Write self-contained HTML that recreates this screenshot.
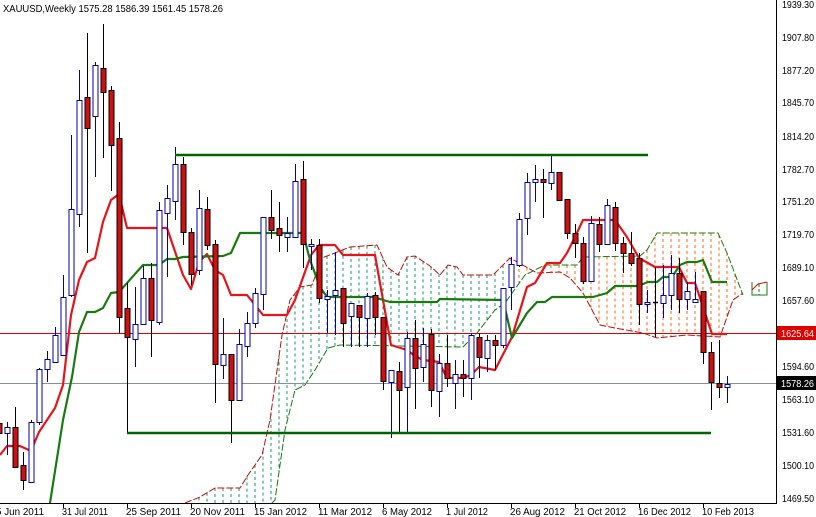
<!DOCTYPE html>
<html><head><meta charset="utf-8"><style>
html,body{margin:0;padding:0;background:#fff;}
svg{display:block;font-family:"Liberation Sans",sans-serif;}
</style></head><body>
<svg id="s" width="816" height="517" viewBox="0 0 816 517" xmlns="http://www.w3.org/2000/svg">
<rect width="816" height="517" fill="#fff"/>
<g id="cloud"></g>
<line x1="0" y1="333.5" x2="776" y2="333.5" stroke="#e00000" stroke-width="1"/>
<line x1="0" y1="383.5" x2="776" y2="383.5" stroke="#8890a0" stroke-width="1"/>
<polyline id="ten" fill="none" stroke="#e8141a" stroke-width="2.2" stroke-linejoin="round"/>
<polyline id="kij" fill="none" stroke="#1a7a12" stroke-width="2.2" stroke-linejoin="round"/>
<g id="candles"></g>
<line x1="175" y1="155" x2="648" y2="155" stroke="#006400" stroke-width="2.5"/>
<line x1="127" y1="433" x2="711" y2="433" stroke="#006400" stroke-width="2.5"/>
<line x1="776.5" y1="0" x2="776.5" y2="503" stroke="#000"/>
<line x1="0" y1="503.5" x2="777" y2="503.5" stroke="#000"/>
<g id="ticks" stroke="#000"></g>
<text x="3" y="12" font-size="10.5" fill="#000" textLength="220" lengthAdjust="spacingAndGlyphs">XAUUSD,Weekly  1575.28 1586.39 1561.45 1578.26</text>
<g font-size="10" fill="#000">
<text x="782" y="8" textLength="32" lengthAdjust="spacingAndGlyphs">1939.30</text>
<text x="782" y="41" textLength="32" lengthAdjust="spacingAndGlyphs">1907.80</text>
<text x="782" y="74" textLength="32" lengthAdjust="spacingAndGlyphs">1877.20</text>
<text x="782" y="106" textLength="32" lengthAdjust="spacingAndGlyphs">1845.70</text>
<text x="782" y="140" textLength="32" lengthAdjust="spacingAndGlyphs">1814.20</text>
<text x="782" y="173" textLength="32" lengthAdjust="spacingAndGlyphs">1782.70</text>
<text x="782" y="205" textLength="32" lengthAdjust="spacingAndGlyphs">1751.20</text>
<text x="782" y="238" textLength="32" lengthAdjust="spacingAndGlyphs">1719.70</text>
<text x="782" y="271" textLength="32" lengthAdjust="spacingAndGlyphs">1689.10</text>
<text x="782" y="304" textLength="32" lengthAdjust="spacingAndGlyphs">1657.60</text>
<text x="782" y="370" textLength="32" lengthAdjust="spacingAndGlyphs">1594.60</text>
<text x="782" y="403" textLength="32" lengthAdjust="spacingAndGlyphs">1563.10</text>
<text x="782" y="436" textLength="32" lengthAdjust="spacingAndGlyphs">1531.60</text>
<text x="782" y="469" textLength="32" lengthAdjust="spacingAndGlyphs">1500.10</text>
<text x="782" y="502" textLength="32" lengthAdjust="spacingAndGlyphs">1469.50</text>
</g>
<rect x="777" y="326" width="39" height="14" fill="#e00000"/>
<text x="781" y="337" font-size="10" fill="#fff" textLength="33" lengthAdjust="spacingAndGlyphs">1625.64</text>
<rect x="777" y="376" width="39" height="14" fill="#000"/>
<text x="781" y="387" font-size="10" fill="#fff" textLength="33" lengthAdjust="spacingAndGlyphs">1578.26</text>
<g font-size="10" fill="#000">
<text x="-4" y="515" textLength="48" lengthAdjust="spacingAndGlyphs">5 Jun 2011</text>
<text x="62" y="515" textLength="46" lengthAdjust="spacingAndGlyphs">31 Jul 2011</text>
<text x="126" y="515" textLength="55" lengthAdjust="spacingAndGlyphs">25 Sep 2011</text>
<text x="190" y="515" textLength="55" lengthAdjust="spacingAndGlyphs">20 Nov 2011</text>
<text x="254" y="515" textLength="53" lengthAdjust="spacingAndGlyphs">15 Jan 2012</text>
<text x="318" y="515" textLength="54" lengthAdjust="spacingAndGlyphs">11 Mar 2012</text>
<text x="382" y="515" textLength="50" lengthAdjust="spacingAndGlyphs">6 May 2012</text>
<text x="446" y="515" textLength="42" lengthAdjust="spacingAndGlyphs">1 Jul 2012</text>
<text x="510" y="515" textLength="55" lengthAdjust="spacingAndGlyphs">26 Aug 2012</text>
<text x="574" y="515" textLength="52" lengthAdjust="spacingAndGlyphs">21 Oct 2012</text>
<text x="638" y="515" textLength="53" lengthAdjust="spacingAndGlyphs">16 Dec 2012</text>
<text x="702" y="515" textLength="52" lengthAdjust="spacingAndGlyphs">10 Feb 2013</text>
</g>
</svg>
<script>
var NS="http://www.w3.org/2000/svg";
function el(p,t,a){var e=document.createElementNS(NS,t);for(var k in a)e.setAttribute(k,a[k]);p.appendChild(e);return e;}
var ticks=document.getElementById('ticks');
[63,127,191,255,319,383,447,511,575,639,703].forEach(function(x){el(ticks,'line',{x1:x+.5,y1:503,x2:x+.5,y2:508});});
function pts(a){return a.map(function(p){return p.join(',');}).join(' ');}
document.getElementById('ten').setAttribute('points',pts([[0,455],[7,446],[20,446],[31,451],[39,432],[55,408],[63,385],[71,315],[79,280],[87,262],[95,258],[103,222],[111,200],[119,194],[127,228],[167,228],[183,275],[191,289],[199,262],[207,254],[215,270],[223,275],[231,295],[247,295],[255,305],[263,315],[287,315],[295,300],[311,255],[319,245],[335,245],[343,255],[375,255],[383,300],[391,345],[407,350],[415,356],[423,360],[439,362],[447,378],[463,378],[471,375],[479,367],[495,370],[512,337],[527,287],[535,283],[547,263],[560,263],[567,253],[575,237],[583,220],[615,220],[627,237],[639,258],[655,267],[679,267],[687,283],[695,283],[712,334],[727,334]]));
document.getElementById('kij').setAttribute('points',pts([[50,503],[63,420],[72,377],[79,332],[87,312],[95,312],[103,308],[111,293],[119,292],[143,265],[159,265],[167,259],[175,259],[183,257],[223,256],[231,253],[240,233],[303,233],[310,260],[320,287],[327,297],[373,297],[390,302],[437,302],[440,299],[503,300],[512,338],[527,313],[537,302],[545,302],[552,297],[593,297],[607,293],[615,286],[638,286],[648,282],[657,282],[663,277],[672,277],[680,265],[687,262],[697,262],[703,260],[712,282],[727,282]]));
var cl=document.getElementById('cloud');
var redA=[[185,503],[200,497],[215,488],[240,488],[248,475],[262,455],[270,420],[282,335],[290,300],[300,287],[312,285],[322,258],[350,247],[377,245],[387,267],[398,275],[407,257],[415,256],[430,266],[440,275],[448,265],[457,267],[463,275],[493,275],[510,258],[537,273],[560,272],[570,278],[583,293],[600,325],[615,328],[643,333],[657,338],[687,335],[720,337],[733,300],[743,293]];
var grB=[[272,503],[275,500],[285,430],[295,390],[305,385],[315,370],[328,348],[340,345],[463,347],[477,333],[495,310],[505,303],[525,275],[545,265],[577,265],[583,257],[640,256],[647,250],[657,233],[718,233],[727,253],[743,295]];
function interp(a,x){if(x<a[0][0]||x>a[a.length-1][0])return null;for(var i=1;i<a.length;i++){if(x<=a[i][0]){var t=(x-a[i-1][0])/(a[i][0]-a[i-1][0]||1);return a[i-1][1]+t*(a[i][1]-a[i-1][1]);}}return null;}
for(var i=0;i<92;i++){var x=7+8*i;var r=interp(redA,x),g=interp(grB,x);if(r==null)continue;if(g==null)g=503;var y1=Math.min(r,g),y2=Math.max(r,g);if(y2-y1<3)continue;
el(cl,'line',{x1:x,y1:y1,x2:x,y2:y2,stroke:x<512?'#109868':'#ff6a10','stroke-width':1,'stroke-dasharray':'3,3'});}
el(cl,'polyline',{points:pts(redA),fill:'none',stroke:'#c01010','stroke-width':1,'stroke-dasharray':'7,2'});
el(cl,'polyline',{points:pts(grB),fill:'none',stroke:'#1a7a12','stroke-width':1,'stroke-dasharray':'7,2'});
el(cl,'polyline',{points:'752,282 752,295 767,295 767,282',fill:'none',stroke:'#1a7a12','stroke-width':1});
el(cl,'polyline',{points:'752,290 758,284 767,282',fill:'none',stroke:'#d01010','stroke-width':1});
el(cl,'line',{x1:759,y1:284,x2:759,y2:295,stroke:'#1a7a12','stroke-dasharray':'3,2'});
var C=[[-1,'r',423,433,418,436],[0,'b',427,433,422,455],[1,'r',427,467,407,468],[2,'r',465,480,452,490],[3,'b',422,482,420,483],[4,'b',369,422,368,425],[5,'b',359,369,351,382],[6,'b',335,362,327,363],[7,'b',297,355,275,355],[8,'b',209,295,135,297],[9,'b',100,214,70,227],[10,'r',97,128,33,253],[11,'b',65,116,62,177],[12,'r',68,92,24,158],[13,'r',90,145,86,191],[14,'r',138,317,122,333],[15,'r',308,337,283,433],[16,'b',324,339,287,367],[17,'b',278,324,266,325],[18,'r',278,320,263,357],[19,'b',210,322,202,325],[20,'b',198,213,185,277],[21,'b',164,201,147,220],[22,'r',164,232,157,245],[23,'r',232,274,228,285],[24,'b',208,270,190,275],[25,'r',209,245,197,250],[26,'r',244,364,240,403],[27,'b',354,365,318,379],[28,'r',354,400,354,443],[29,'b',344,400,329,400],[30,'b',323,346,312,357],[31,'b',293,323,288,328],[32,'b',217,294,217,310],[33,'r',217,230,190,239],[34,'r',228,235,202,252],[35,'b',233,237,217,252],[36,'b',181,237,164,237],[37,'r',179,244,161,268],[38,'b',244,246,239,270],[39,'r',245,298,239,303],[40,'b',296,299,290,333],[41,'b',290,295,252,335],[42,'r',288,323,288,347],[43,'b',303,316,303,347],[44,'r',305,317,305,347],[45,'b',296,318,293,347],[46,'r',295,317,292,335],[47,'r',317,381,317,390],[48,'b',370,382,370,438],[49,'r',371,390,362,432],[50,'b',338,387,332,432],[51,'r',338,368,320,409],[52,'b',344,367,328,382],[53,'r',334,390,329,407],[54,'b',363,391,354,417],[55,'r',363,378,335,387],[56,'b',374,383,360,409],[57,'r',374,378,360,397],[58,'b',335,378,333,400],[59,'r',337,357,333,378],[60,'b',340,358,335,372],[61,'r',340,345,335,370],[62,'b',288,345,288,348],[63,'b',264,287,257,310],[64,'b',219,265,213,267],[65,'b',182,218,173,235],[66,'b',179,182,165,202],[67,'r',179,182,169,218],[68,'b',172,183,155,190],[69,'r',172,200,172,200],[70,'r',199,233,199,239],[71,'r',233,243,224,258],[72,'r',243,281,237,284],[73,'b',223,281,216,282],[74,'r',224,244,217,252],[75,'b',205,244,199,244],[76,'r',207,243,202,251],[77,'r',243,253,237,273],[78,'r',253,263,232,266],[79,'r',258,304,253,325],[80,'b',302,304,290,313],[81,'k',302,303,267,337],[82,'b',295,303,265,318],[83,'b',273,295,255,310],[84,'r',273,299,258,313],[85,'b',291,299,282,310],[86,'b',299,302,272,302],[87,'r',291,352,291,364],[88,'r',352,382,342,410],[89,'r',383,387,340,398],[90,'b',384,387,376,403]];
var cg=document.getElementById('candles');
C.forEach(function(c){var x=7+8*c[0];var col=c[1]=='b'?'#0000b0':'#000';
el(cg,'line',{x1:x+.5,y1:c[4],x2:x+.5,y2:c[5],stroke:col,'stroke-width':1});
var h=Math.max(c[3]-c[2],1);
if(c[1]=='k'){el(cg,'line',{x1:x-2,y1:c[2]+.5,x2:x+3,y2:c[2]+.5,stroke:'#000','stroke-width':1.5});return;}
el(cg,'rect',{x:x-2,y:c[2]+.5,width:5,height:h,fill:c[1]=='b'?'#fff':'#d01010',stroke:col,'stroke-width':1});});
</script>
</body></html>
